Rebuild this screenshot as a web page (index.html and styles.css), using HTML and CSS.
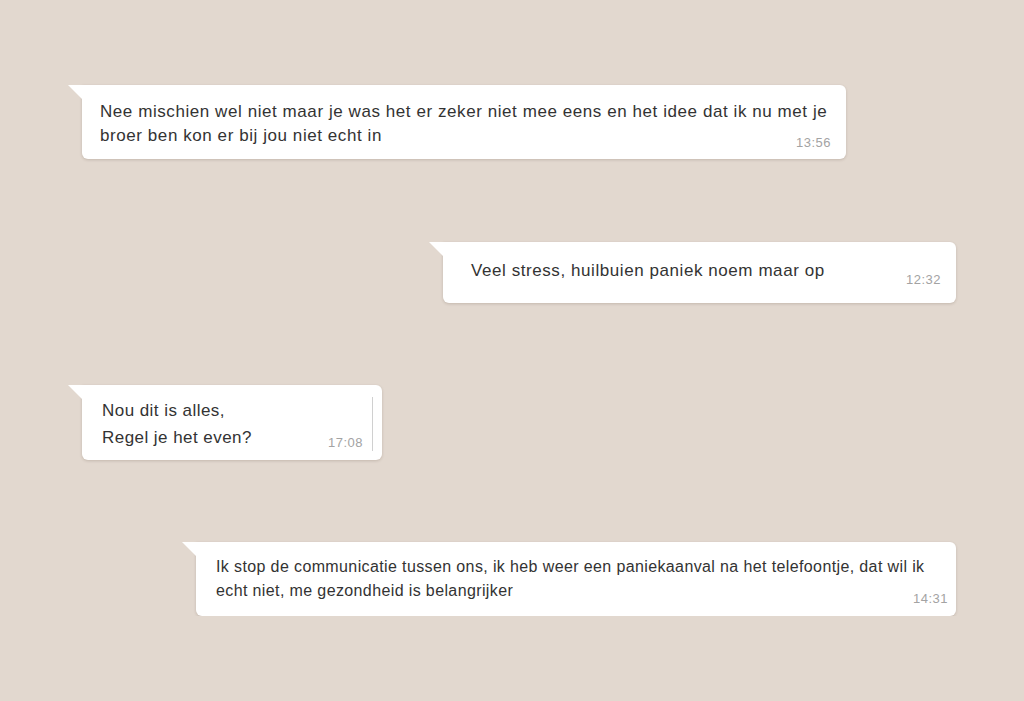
FILE: index.html
```html
<!DOCTYPE html>
<html lang="nl">
<head>
<meta charset="UTF-8">
<meta name="viewport" content="width=device-width, initial-scale=1.0">
<title>Berichten</title>
<link rel="stylesheet" href="styles.css">
</head>
<body>
  <div class="chat">
    <div class="bubble bubble-one">
      <p class="text">Nee mischien wel niet maar je was het er zeker niet mee eens en het idee dat ik nu met je<br>broer ben kon er bij jou niet echt in</p>
      <span class="time">13:56</span>
    </div>

    <div class="bubble bubble-two">
      <p class="text">Veel stress, huilbuien paniek noem maar op</p>
      <span class="time">12:32</span>
    </div>

    <div class="bubble bubble-three">
      <div class="inner">
        <p class="text">Nou dit is alles,<br>Regel je het even?</p>
        <span class="time">17:08</span>
      </div>
    </div>

    <div class="bubble bubble-four">
      <p class="text">Ik stop de communicatie tussen ons, ik heb weer een paniekaanval na het telefoontje, dat wil ik<br>echt niet, me gezondheid is belangrijker</p>
      <span class="time">14:31</span>
    </div>
  </div>
</body>
</html>
```

FILE: styles.css
```css
body {
  margin: 0;
  background: #e2d8cf;
  font-family: "Helvetica Neue", "Liberation Sans", Arial, sans-serif;
  color: #333;
}

.chat {
  display: flex;
  flex-direction: column;
  align-items: flex-start;
  padding-top: 85px;
}

/* tekstballon */
.bubble {
  position: relative;
  display: flex;
  flex-direction: column;
  background: #fff;
  border-radius: 0 6px 6px 6px;
  box-shadow: 0 1px 3px rgba(60, 40, 20, 0.18);
  box-sizing: border-box;
}
.bubble::before {
  content: "";
  position: absolute;
  top: 0;
  left: -14px;
  width: 14px;
  height: 14px;
  background: #fff;
  clip-path: polygon(0 0, 100% 0, 100% 100%);
}

.text {
  margin: 0;
  font-size: 17px;
  line-height: 24px;
  letter-spacing: 0.57px;
  white-space: nowrap;
}

.time {
  align-self: flex-end;
  font-size: 13px;
  line-height: 16px;
  letter-spacing: 0.5px;
  color: #a3a3a3;
}

.bubble-one {
  margin-left: 82px;
  width: 764px;
  padding: 15px 15px 8px 18px;
}
.bubble-one .time {
  margin-top: -13px;
}

.bubble-two {
  margin-top: 83px;
  margin-left: 443px;
  width: 513px;
  padding: 17px 15px 15px 28px;
}
.bubble-two .time {
  margin-top: -11px;
}

.bubble-three {
  margin-top: 82px;
  margin-left: 82px;
  width: 300px;
  padding: 12px 9px 9px 20px;
}
.bubble-three .inner {
  display: flex;
  flex-direction: column;
  border-right: 1px solid #d0d0d0;
  padding-right: 9px;
}
.bubble-three .text {
  line-height: 27px;
  letter-spacing: 0.45px;
}
.bubble-three .time {
  margin-top: -16px;
}

.bubble-four {
  margin-top: 82px;
  margin-left: 196px;
  width: 760px;
  padding: 13px 8px 9px 20px;
}
.bubble-four .text {
  font-size: 16px;
  letter-spacing: 0.38px;
}
.bubble-four .time {
  margin-top: -12px;
}
```
